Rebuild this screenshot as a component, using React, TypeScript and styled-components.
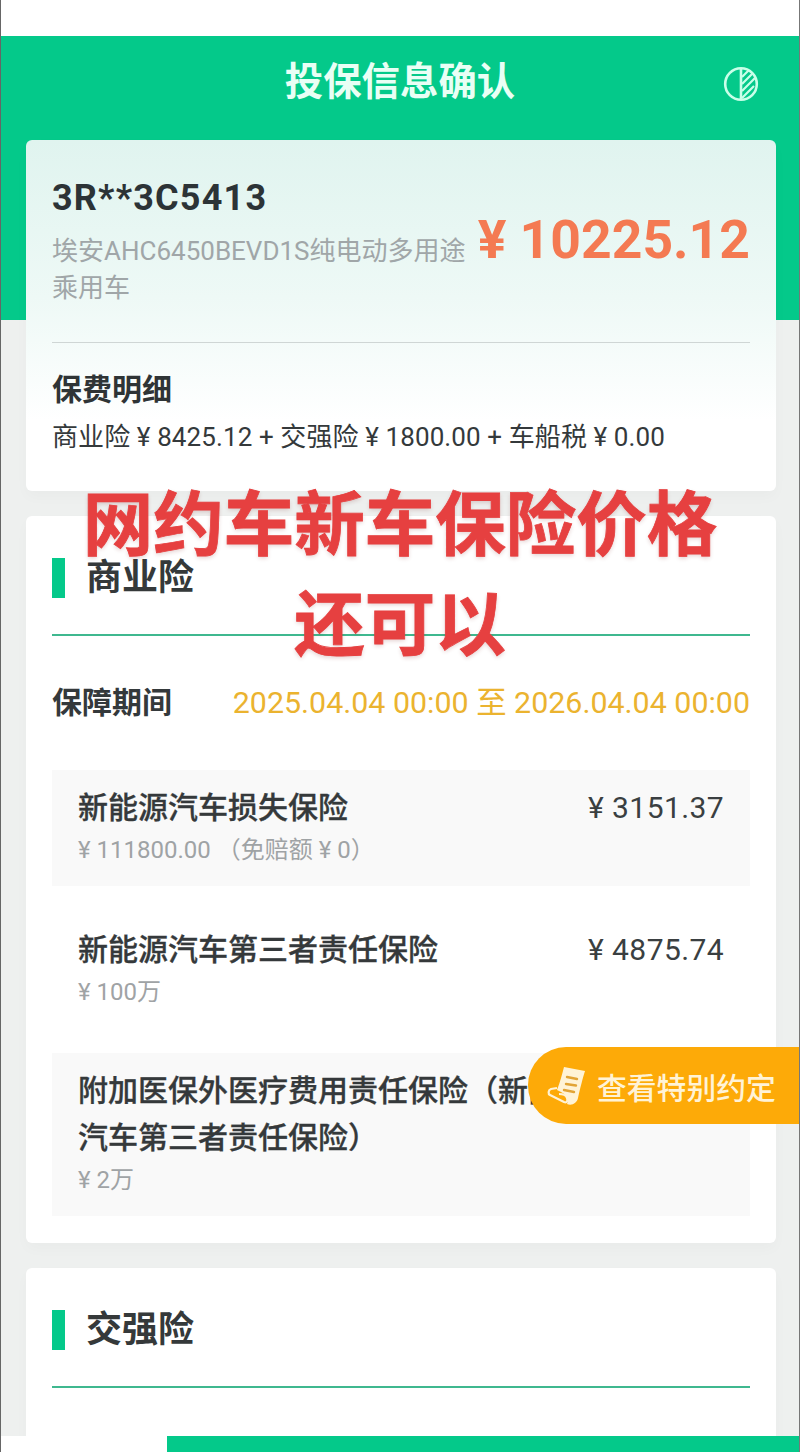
import React from "react";
import styled, { createGlobalStyle } from "styled-components";

const CJK = `Roboto, "Noto Sans CJK SC", sans-serif`;

const Global = createGlobalStyle`
  html, body { margin: 0; padding: 0; background: #eef0ef; }
  * { box-sizing: border-box; }
  body { font-family: ${CJK}; }
`;

const Page = styled.div`
  position: relative;
  width: 800px;
  height: 1452px;
  overflow: hidden;
  background: #eef0ef;
  border-left: 1px solid #666;
  border-right: 1px solid #777;
`;

const StatusStrip = styled.div`
  height: 36px;
  background: #fff;
`;

const Hero = styled.header`
  height: 284px;
  background: #04c98a;
  display: flex;
  align-items: flex-start;
  justify-content: center;
  padding-top: 20px;
`;

const HeroTitle = styled.h1`
  margin: 0;
  font-size: 38.4px;
  line-height: 52px;
  font-weight: 700;
  color: #e9fff5;
`;

const ThemeButton = styled.svg`
  position: absolute;
  right: 39px;
  top: 65px;
  width: 38px;
  height: 38px;
`;

const Content = styled.main`
  margin-top: -180px;
  padding: 0 23px 0 25px;
  display: flex;
  flex-direction: column;
  gap: 25px;
`;

const Card = styled.section`
  background: #fff;
  border-radius: 6px;
  padding: 0 26px;
  box-shadow: 0 6px 14px rgba(0, 0, 0, 0.025);
`;

const SummaryCard = styled(Card)`
  height: 351px;
  padding-top: 34px;
  background: linear-gradient(180deg, #e0f4ef 0%, #eef9f6 45%, #ffffff 80%);
`;

const VehicleRow = styled.div`
  display: flex;
  justify-content: space-between;
  align-items: center;
  height: 134px;
`;

const VehicleInfo = styled.div`
  width: 420px;
  align-self: flex-start;
`;

const Plate = styled.div`
  font-size: 36px;
  line-height: 48px;
  font-weight: 700;
  color: #2c3336;
  letter-spacing: 1.2px;
`;

const Model = styled.div`
  margin-top: 11px;
  font-size: 26px;
  line-height: 37px;
  color: #a0a6a8;
`;

const Total = styled.div`
  font-size: 53.5px;
  line-height: 60px;
  font-weight: 700;
  color: #f47a52;
  white-space: nowrap;
  margin-top: -3px;
`;

const Divider = styled.hr`
  margin: 34px 0 0;
  border: 0;
  height: 1px;
  background: #cfd6d5;
`;

const BreakdownTitle = styled.div`
  margin-top: 27px;
  font-size: 30px;
  line-height: 40px;
  font-weight: 700;
  color: #2f3436;
`;

const Breakdown = styled.div`
  margin-top: 8px;
  font-size: 26px;
  line-height: 38px;
  letter-spacing: 0.1px;
  color: #34393b;
  white-space: nowrap;
`;

const SectionHead = styled.div`
  display: flex;
  align-items: center;
  gap: 21px;
  height: 40px;
  margin-top: 42px;
`;

const SectionMark = styled.span`
  width: 13px;
  height: 40px;
  background: #04c98a;
`;

const SectionTitle = styled.h2`
  margin: 0;
  font-size: 36px;
  line-height: 40px;
  font-weight: 700;
  color: #35393a;
`;

const SectionRule = styled.div`
  height: 2px;
  margin-top: 36px;
  background: #3fb88f;
`;

const SectionBody = styled.div`
  height: 120px;
`;

const Period = styled.div`
  display: flex;
  justify-content: space-between;
  align-items: center;
  margin-top: 42px;
  height: 44px;
`;

const PeriodLabel = styled.span`
  font-size: 30px;
  font-weight: 700;
  color: #34393b;
`;

const PeriodValue = styled.span`
  font-size: 30.4px;
  color: #ebb32f;
  white-space: nowrap;
`;

const Coverages = styled.div`
  margin-top: 48px;
  display: flex;
  flex-direction: column;
  gap: 26px;
  padding-bottom: 27.5px;
`;

const Coverage = styled.div<{ $shaded?: boolean }>`
  display: flex;
  justify-content: space-between;
  padding: 14px 26px 16.5px;
  background: ${(p) => (p.$shaded ? "#f9f9f9" : "transparent")};
`;

const CoverageText = styled.div`
  max-width: 515px;
`;

const CoverageName = styled.div`
  font-size: 30px;
  line-height: 47px;
  font-weight: 500;
  -webkit-text-stroke: 0.3px #35393b;
  color: #35393b;
`;

const CoverageSub = styled.div`
  margin-top: 1px;
  font-size: 24px;
  line-height: 37px;
  color: #9fa3a5;
`;

const CoveragePrice = styled.div`
  font-size: 30px;
  line-height: 47px;
  color: #3a3f41;
  white-space: nowrap;
  letter-spacing: 0.4px;
`;

const Caption = styled.div`
  position: absolute;
  left: 0;
  right: 0;
  top: 476px;
  text-align: center;
  font-size: 70.5px;
  line-height: 100px;
  font-weight: 700;
  color: #e64040;
  -webkit-text-stroke: 0.8px #e64040;
  text-shadow: 0 2px 4px rgba(120, 30, 30, 0.2);
  pointer-events: none;
`;

const SpecialTerms = styled.button`
  position: absolute;
  right: 0;
  top: 1047px;
  width: 271px;
  height: 77px;
  border: 0;
  padding: 0 0 0 19px;
  display: flex;
  align-items: center;
  gap: 10px;
  border-radius: 38px 0 0 38px;
  background: #fdaa08;
  color: #fff3d6;
  font-family: inherit;
  font-size: 29.8px;
  font-weight: 500;
  white-space: nowrap;
`;

const BottomBar = styled.div`
  position: absolute;
  left: 0;
  right: 0;
  bottom: 0;
  height: 16px;
  display: flex;
  background: #fff;
`;

const BuyButton = styled.div`
  margin-left: auto;
  width: 632px;
  background: #04c98a;
`;

function HalfCircleIcon() {
  return (
    <ThemeButton viewBox="0 0 38 38" fill="none" stroke="#c9ffe9" strokeWidth="2.6">
      <circle cx="19" cy="19" r="15.8" />
      <path d="M19 3v32" />
      <path strokeWidth="2.2" d="M20 12l7-7M20 19l11-11M20 26l13-13M20 33l12-12" />
    </ThemeButton>
  );
}

function TermsIcon() {
  return (
    <svg width="40" height="42" viewBox="0 0 40 42" fill="none">
      <path
        d="M17 2L38 6C36 12 33 24 31 33C30 38 25 41 20 39C22 35 20 30 14 27L10 25C13 17 15 10 17 2Z"
        fill="#fff3d6"
      />
      <path
        d="M10 23L4 24C1 25 1 29 3 30L17 37C20 38 21 36 20 33C19 30 15 29 12 29"
        stroke="#fff3d6"
        strokeWidth="2.2"
      />
      <path
        d="M20 12L30 14M19 19L29 20.500M17 25L27 27"
        stroke="#e2a435"
        strokeWidth="2.400"
        strokeLinecap="round"
      />
    </svg>
  );
}

const coverages = [
  { name: "新能源汽车损失保险", sub: "¥ 111800.00 （免赔额 ¥ 0）", price: "¥ 3151.37", shaded: true },
  { name: "新能源汽车第三者责任保险", sub: "¥ 100万", price: "¥ 4875.74" },
  { name: "附加医保外医疗费用责任保险（新能源汽车第三者责任保险）", sub: "¥ 2万", shaded: true },
];

export default function App() {
  return (
    <Page>
      <Global />
      <StatusStrip />
      <Hero>
        <HeroTitle>投保信息确认</HeroTitle>
      </Hero>
      <HalfCircleIcon />
      <Content>
        <SummaryCard>
          <VehicleRow>
            <VehicleInfo>
              <Plate>3R**3C5413</Plate>
              <Model>埃安AHC6450BEVD1S纯电动多用途乘用车</Model>
            </VehicleInfo>
            <Total>¥ 10225.12</Total>
          </VehicleRow>
          <Divider />
          <BreakdownTitle>保费明细</BreakdownTitle>
          <Breakdown>商业险 ¥ 8425.12 + 交强险 ¥ 1800.00 + 车船税 ¥ 0.00</Breakdown>
        </SummaryCard>
        <Card>
          <SectionHead>
            <SectionMark />
            <SectionTitle>商业险</SectionTitle>
          </SectionHead>
          <SectionRule />
          <Period>
            <PeriodLabel>保障期间</PeriodLabel>
            <PeriodValue>2025.04.04 00:00 至 2026.04.04 00:00</PeriodValue>
          </Period>
          <Coverages>
            {coverages.map((c) => (
              <Coverage key={c.name} $shaded={c.shaded}>
                <CoverageText>
                  <CoverageName>{c.name}</CoverageName>
                  <CoverageSub>{c.sub}</CoverageSub>
                </CoverageText>
                {c.price && <CoveragePrice>{c.price}</CoveragePrice>}
              </Coverage>
            ))}
          </Coverages>
        </Card>
        <Card>
          <SectionHead>
            <SectionMark />
            <SectionTitle>交强险</SectionTitle>
          </SectionHead>
          <SectionRule />
          <SectionBody />
        </Card>
      </Content>
      <Caption>
        网约车新车保险价格
        <br />
        还可以
      </Caption>
      <SpecialTerms>
        <TermsIcon />
        查看特别约定
      </SpecialTerms>
      <BottomBar>
        <BuyButton />
      </BottomBar>
    </Page>
  );
}
